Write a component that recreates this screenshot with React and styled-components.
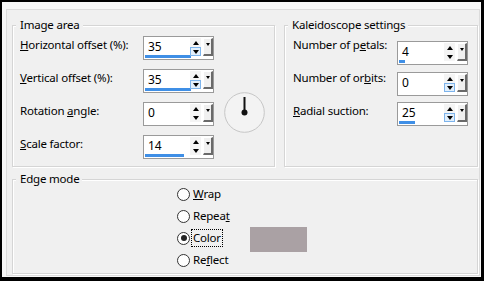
import React from 'react';
import styled, { createGlobalStyle } from 'styled-components';

const GlobalStyle = createGlobalStyle`
  html, body { margin: 0; padding: 0; background: #fff; }
  body {
    font-family: "Segoe UI", "Noto Sans", "Open Sans", sans-serif;
    font-size: 11.5px;
    letter-spacing: -0.2px;
    color: #000;
  }
  * { box-sizing: border-box; }
`;

const Frame = styled.div`
  width: 484px;
  height: 281px;
  border-style: solid;
  border-color: #000;
  border-width: 2px 3px 4px 2px;
  background: #f7f7f7;
  display: flex;
  flex-direction: column;
  padding: 7px 1px 1px 4px;
`;

const Panel = styled.div`
  flex: 1;
  border: 1px solid #dcdcdc;
  background: #f0f0f0;
  padding: 15px 1px 1px 5px;
  display: flex;
  flex-direction: column;
  gap: 12px;
`;

const TopRow = styled.div`
  display: flex;
  gap: 9px;
  height: 142px;
`;

const Group = styled.div`
  position: relative;
  border: 1px solid #d5d5d5;
  box-shadow: inset 1px 1px 0 #fff, 1px 1px 0 #fff;
  width: ${p => (p.$width ? `${p.$width}px` : 'auto')};
  flex: ${p => (p.$width ? '0 0 auto' : '1')};
`;

const Legend = styled.div`
  position: absolute;
  top: -9px;
  left: 3px;
  padding: 0 3px 0 4px;
  background: #f0f0f0;
  line-height: 16px;
  white-space: nowrap;
`;

const FormGrid = styled.div`
  display: grid;
  grid-template-columns: ${p => p.$labelWidth}px 71px ${p => (p.$extra ? '51px' : '')};
  grid-template-rows: repeat(${p => p.$rows}, 24px);
  row-gap: 9px;
  padding: 10px 0 0 ${p => p.$padLeft}px;
`;

const Label = styled.div`
  grid-column: 1;
  line-height: 16px;
  padding-top: 1px;
  white-space: nowrap;
`;

const Key = styled.span`
  text-decoration: underline;
  text-underline-offset: 1px;
`;

const Field = styled.div`
  grid-column: 2;
  width: 71px;
  height: 24px;
  border: 1px solid #9a9a9a;
  background: #fff;
  display: flex;
  margin-top: ${p => p.$shift || 0}px;
`;

const ValueArea = styled.div`
  width: 46px;
  display: flex;
  flex-direction: column;
  padding: 2px 0 0 1px;
`;

const ValueText = styled.div`
  line-height: 16px;
  padding-left: 3px;
  height: 16px;
  font-size: 12px;
`;

const Bar = styled.div`
  height: 3px;
  background: #3f8fe6;
`;

const Spinner = styled.div`
  width: 11px;
  display: flex;
  flex-direction: column;
  padding-top: 1px;
`;

const SpinBtn = styled.div`
  height: 9px;
  display: flex;
  align-items: center;
  justify-content: center;
  border: 1px solid ${p => (p.$hot ? '#7db4ec' : 'transparent')};
  background: ${p => (p.$hot ? '#e2effb' : '#f4f4f4')};
`;

const Arrow = styled.span`
  width: 0;
  height: 0;
  border-left: 3px solid transparent;
  border-right: 3px solid transparent;
  ${p => (p.$up ? 'border-bottom: 4px solid #000;' : 'border-top: 4px solid #000;')}
`;

const DropBtn = styled.div`
  width: 10px;
  height: 18px;
  margin: 1px 0 0 2px;
  border-style: solid;
  border-width: 1px 2px 2px 1px;
  border-color: #fff #6a6a6a #6a6a6a #fff;
  background: #f0f0f0;
  display: flex;
  justify-content: center;
  padding-top: 4px;
`;

const SmallArrow = styled.span`
  width: 0;
  height: 0;
  border-left: 2px solid transparent;
  border-right: 2px solid transparent;
  border-top: 3px solid #000;
`;

const DialBox = styled.div`
  grid-column: 3;
  grid-row: 2 / span 3;
  align-self: center;
  margin: -3px 0 0 10px;
  width: 41px;
  height: 41px;
`;

const EdgeGrid = styled.div`
  display: grid;
  grid-template-columns: 73px 57px;
  grid-template-rows: repeat(4, 20px);
  row-gap: 2px;
  padding: 4px 0 0 164px;
`;

const RadioRow = styled.div`
  grid-column: 1;
  display: flex;
  align-items: center;
  gap: 3px;
  white-space: nowrap;
`;

const RadioCircle = styled.span`
  width: 13px;
  height: 13px;
  border-radius: 50%;
  border: 1px solid #333;
  background: #fff;
  display: flex;
  align-items: center;
  justify-content: center;
  flex: 0 0 auto;
`;

const RadioDot = styled.span`
  width: 6px;
  height: 6px;
  border-radius: 50%;
  background: #222;
`;

const RadioText = styled.span`
  line-height: 16px;
  border: 1px dotted ${p => (p.$focus ? '#000' : 'transparent')};
  padding: 0 1px;
  margin-left: -2px;
`;

const Swatch = styled.div`
  grid-column: 2;
  grid-row: 3;
  align-self: center;
  height: 25px;
  margin-top: 2px;
  background: #aaa1a4;
`;

function SpinField({ value, bar, hot, shift }) {
  return (
    <Field $shift={shift}>
      <ValueArea>
        <ValueText>{value}</ValueText>
        {bar > 0 && <Bar style={{ width: `${bar}px` }} />}
      </ValueArea>
      <Spinner>
        <SpinBtn><Arrow $up /></SpinBtn>
        <SpinBtn $hot={hot}><Arrow /></SpinBtn>
      </Spinner>
      <DropBtn><SmallArrow /></DropBtn>
    </Field>
  );
}

function Dial() {
  return (
    <DialBox>
      <svg width="41" height="41" viewBox="0 0 41 41">
        <circle cx="20.5" cy="20.5" r="19.8" fill="#f3f3f3" stroke="#c6c6c6" strokeWidth="1" />
        <line x1="20.5" y1="20.5" x2="20.5" y2="5" stroke="#111" strokeWidth="2" />
        <circle cx="20.5" cy="20.5" r="3" fill="#111" />
      </svg>
    </DialBox>
  );
}

function Radio({ checked, focus, children }) {
  return (
    <RadioRow>
      <RadioCircle>{checked && <RadioDot />}</RadioCircle>
      <RadioText $focus={focus}>{children}</RadioText>
    </RadioRow>
  );
}

export default function App() {
  return (
    <>
      <GlobalStyle />
      <Frame>
        <Panel>
          <TopRow>
            <Group $width={263}>
              <Legend>Image area</Legend>
              <FormGrid $labelWidth={123} $rows={4} $padLeft={7} $extra>
                <Label><Key>H</Key>orizontal offset (%):</Label>
                <SpinField value="35" bar={46} hot />
                <Dial />
                <Label><Key>V</Key>ertical offset (%):</Label>
                <SpinField value="35" bar={46} hot />
                <Label>Rotation <Key>a</Key>ngle:</Label>
                <SpinField value="0" bar={0} />
                <Label><Key>S</Key>cale factor:</Label>
                <SpinField value="14" bar={39} />
              </FormGrid>
            </Group>
            <Group>
              <Legend>Kaleidoscope settings</Legend>
              <FormGrid $labelWidth={104} $rows={3} $padLeft={8}>
                <Label>Number of p<Key>e</Key>tals:</Label>
                <SpinField value="4" bar={6} shift={5} />
                <Label>Number of or<Key>b</Key>its:</Label>
                <SpinField value="0" bar={0} shift={3} hot />
                <Label><Key>R</Key>adial suction:</Label>
                <SpinField value="25" bar={16} hot />
              </FormGrid>
            </Group>
          </TopRow>
          <Group style={{ flex: 1 }}>
            <Legend>Edge mode</Legend>
            <EdgeGrid>
              <Radio><Key>W</Key>rap</Radio>
              <Radio>Repea<Key>t</Key></Radio>
              <Radio checked focus>Color</Radio>
              <Radio>Re<Key>f</Key>lect</Radio>
              <Swatch />
            </EdgeGrid>
          </Group>
        </Panel>
      </Frame>
    </>
  );
}
